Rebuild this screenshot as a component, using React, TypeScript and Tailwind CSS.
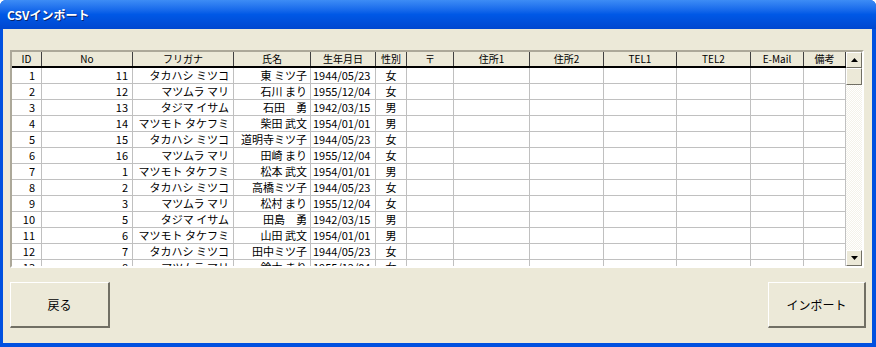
import React from 'react'

const font = { fontFamily: '"Noto Sans CJK JP", "Noto Sans", sans-serif' }

const cols = [
  { label: 'ID', w: 'w-[30px]', align: 'text-right pr-[6px]' },
  { label: 'No', w: 'w-[91px]', align: 'text-right pr-[4px]' },
  { label: 'フリガナ', w: 'w-[101px]', align: 'text-right pr-[4px]' },
  { label: '氏名', w: 'w-[77px]', align: 'text-right pr-[3px]' },
  { label: '生年月日', w: 'w-[65px]', align: 'text-left pl-[2px]' },
  { label: '性別', w: 'w-[31px]', align: 'text-center' },
  { label: '〒', w: 'w-[47px]', align: 'text-left' },
  { label: '住所1', w: 'w-[76px]', align: 'text-left' },
  { label: '住所2', w: 'w-[74px]', align: 'text-left' },
  { label: 'TEL1', w: 'w-[73px]', align: 'text-left' },
  { label: 'TEL2', w: 'w-[74px]', align: 'text-left' },
  { label: 'E-Mail', w: 'w-[53px]', align: 'text-left' },
  { label: '備考', w: 'w-[42px]', align: 'text-left' },
]

const rows = [
  ['1', '11', 'タカハシ ミツコ', '東 ミツ子', '1944/05/23', '女'],
  ['2', '12', 'マツムラ マリ', '石川 まり', '1955/12/04', '女'],
  ['3', '13', 'タジマ イサム', '石田　勇', '1942/03/15', '男'],
  ['4', '14', 'マツモト タケフミ', '柴田 武文', '1954/01/01', '男'],
  ['5', '15', 'タカハシ ミツコ', '道明寺ミツ子', '1944/05/23', '女'],
  ['6', '16', 'マツムラ マリ', '田崎 まり', '1955/12/04', '女'],
  ['7', '1', 'マツモト タケフミ', '松本 武文', '1954/01/01', '男'],
  ['8', '2', 'タカハシ ミツコ', '高橋ミツ子', '1944/05/23', '女'],
  ['9', '3', 'マツムラ マリ', '松村 まり', '1955/12/04', '女'],
  ['10', '5', 'タジマ イサム', '田島　勇', '1942/03/15', '男'],
  ['11', '6', 'マツモト タケフミ', '山田 武文', '1954/01/01', '男'],
  ['12', '7', 'タカハシ ミツコ', '田中ミツ子', '1944/05/23', '女'],
  ['13', '8', 'マツムラ マリ', '鈴木 まり', '1955/12/04', '女'],
]

function XpButton({ label, w }: { label: string; w: string }) {
  return (
    <div
      className={`${w} h-[46px] bg-[#ece9d8] border-t border-l border-t-white border-l-white border-b-2 border-r-2 border-b-[#716f64] border-r-[#716f64] flex items-center justify-center text-[12px] text-black`}
    >
      {label}
    </div>
  )
}

export default function App() {
  return (
    <div className="w-[876px] h-[347px] flex flex-col bg-[#0050e0] overflow-hidden rounded-t-[6px]" style={font}>
      <div className="h-[29px] shrink-0 flex items-center pl-[7px] bg-gradient-to-b from-[#3d8cf5] via-[#0058e6] to-[#0047d0]">
        <span className="text-white font-bold text-[12px] [text-shadow:1px_1px_0_#0a246a]">CSVインポート</span>
      </div>

      <div className="flex-1 ml-[3px] mr-[4px] mb-[4px] bg-[#ece9d8] flex flex-col pt-[21px] pl-[7px]">
        <div className="w-[854px] h-[218px] border-2 border-t-[#aca899] border-l-[#aca899] border-b-white border-r-white flex bg-white overflow-hidden">
          <div className="w-[834px] flex flex-col overflow-hidden">
            <div className="flex h-[16px] shrink-0 bg-[#ece9d8] border-b-2 border-black">
              {cols.map(c => (
                <div
                  key={c.label}
                  className={`${c.w} shrink-0 border-r border-[#404040] text-center text-[10px] leading-[14px] text-black`}
                >
                  {c.label}
                </div>
              ))}
            </div>
            {rows.map(r => (
              <div key={r[0]} className="flex h-[16px] shrink-0 border-b border-[#c0c0c0]">
                {cols.map((c, i) => (
                  <div
                    key={c.label}
                    className={`${c.w} ${c.align} shrink-0 border-r border-[#c0c0c0] text-[11px] leading-[15px] text-black whitespace-nowrap overflow-hidden`}
                  >
                    {r[i] ?? ''}
                  </div>
                ))}
              </div>
            ))}
          </div>

          <div className="w-[16px] flex flex-col bg-[repeating-conic-gradient(#f4f2ea_0_25%,#ffffff_0_50%)] bg-[length:2px_2px]">
            <div className="h-[16px] bg-[#ece9d8] border border-t-white border-l-white border-b-[#716f64] border-r-[#716f64] flex items-center justify-center">
              <svg width="7" height="4" viewBox="0 0 7 4"><polygon points="3.5,0 7,4 0,4" fill="#000" /></svg>
            </div>
            <div className="h-[17px] bg-[#ece9d8] border border-t-white border-l-white border-b-[#716f64] border-r-[#716f64]" />
            <div className="flex-1" />
            <div className="h-[16px] bg-[#ece9d8] border border-t-white border-l-white border-b-[#716f64] border-r-[#716f64] flex items-center justify-center">
              <svg width="7" height="4" viewBox="0 0 7 4"><polygon points="0,0 7,0 3.5,4" fill="#000" /></svg>
            </div>
          </div>
        </div>

        <div className="flex justify-between mt-[14px] pr-[6px]">
          <XpButton label="戻る" w="w-[100px]" />
          <XpButton label="インポート" w="w-[98px]" />
        </div>
      </div>
    </div>
  )
}
